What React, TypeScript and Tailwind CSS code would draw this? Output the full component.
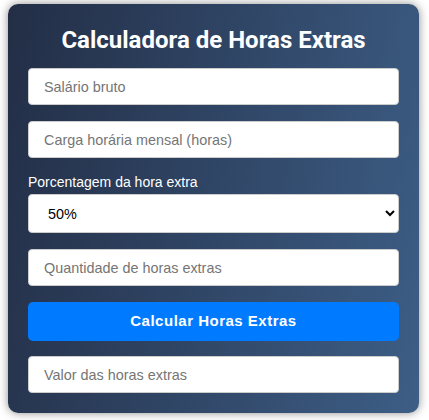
import React, { useState } from "react";

const FIELD =
  "block w-full h-[37px] rounded-[4px] border border-[#cccccc] bg-white px-[15px] text-[14.4px] text-black placeholder:text-[#757575] outline-none";

export default function App() {
  const [salario, setSalario] = useState("");
  const [carga, setCarga] = useState("");
  const [pct, setPct] = useState("50");
  const [qtd, setQtd] = useState("");
  const [resultado, setResultado] = useState("");

  const calcular = () => {
    const s = parseFloat(salario);
    const c = parseFloat(carga);
    const q = parseFloat(qtd);
    if (!s || !c || !q) return;
    const hora = s / c;
    const valor = hora * (1 + parseFloat(pct) / 100) * q;
    setResultado("R$ " + valor.toFixed(2));
  };

  return (
    <div className="min-h-[420px] bg-white pt-[4px] pl-[8px] pr-[10px] font-['Liberation_Sans',Arial,sans-serif]">
      <div className="rounded-[10px] bg-[linear-gradient(100deg,#232e46_0%,#3d5e86_100%)] px-[20px] pt-[22px] pb-[20px] shadow-[0_0_10px_rgba(0,0,0,0.45)]">
        <h1 className="mb-[14px] text-center font-['Roboto',sans-serif] text-[24px] font-bold leading-[28px] text-white">
          Calculadora de Horas Extras
        </h1>

        <input
          className={FIELD}
          placeholder="Salário bruto"
          value={salario}
          onChange={(e) => setSalario(e.target.value)}
        />
        <input
          className={`${FIELD} mt-[16px]`}
          placeholder="Carga horária mensal (horas)"
          value={carga}
          onChange={(e) => setCarga(e.target.value)}
        />

        <label className="mt-[16px] mb-[3px] block text-[14px] leading-[17px] text-white">
          Porcentagem da hora extra
        </label>
        <select
          className="block h-[39px] w-full rounded-[4px] border border-[#cccccc] bg-white pl-[15px] pr-[6px] text-[14.4px] text-black outline-none"
          value={pct}
          onChange={(e) => setPct(e.target.value)}
        >
          <option value="50">50%</option>
          <option value="100">100%</option>
        </select>

        <input
          className={`${FIELD} mt-[16px]`}
          placeholder="Quantidade de horas extras"
          value={qtd}
          onChange={(e) => setQtd(e.target.value)}
        />

        <button
          onClick={calcular}
          className="mt-[16px] block h-[39px] w-full rounded-[5px] bg-[#007bff] text-[15px] font-bold tracking-[0.5px] text-white"
        >
          Calcular Horas Extras
        </button>

        <input
          className={`${FIELD} mt-[15px]`}
          placeholder="Valor das horas extras"
          value={resultado}
          readOnly
        />
      </div>
    </div>
  );
}
